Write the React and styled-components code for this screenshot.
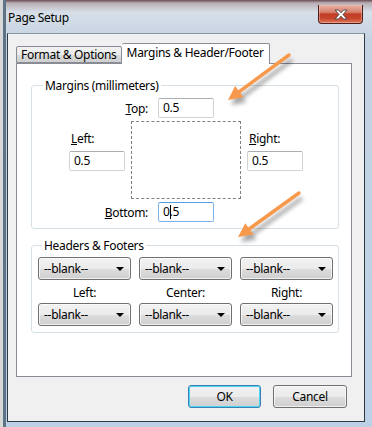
import React from "react";
import styled, { createGlobalStyle } from "styled-components";

const GlobalStyle = createGlobalStyle`
	html, body {
		margin: 0;
		padding: 0;
		background: #d6d6d6;
	}
	body {
		font-family: "Noto Sans", "Open Sans", "Liberation Sans", sans-serif;
		font-size: 12px;
		letter-spacing: -0.3px;
		color: #000;
	}
`;

const Window = styled.div`
	position: relative;
	width: 372px;
	height: 427px;
	box-sizing: border-box;
	display: flex;
	flex-direction: column;
	padding: 0 7px 5px 4px;
	background:
		linear-gradient(90deg, #5f7386 0, #5f7386 3px, transparent 3px),
		linear-gradient(180deg, #6a4a52 0, #b7aeb4 3px, #d7dfe8 12px, #c4d3e2 40px, #bcd1e6 100%);
	border-left: 3px solid #d8d8d8;
	overflow: hidden;
`;

const TitleBar = styled.div`
	height: 33px;
	display: flex;
	justify-content: space-between;
	align-items: flex-start;
`;

const Title = styled.div`
	margin-top: 10px;
	margin-left: 1px;
	font-size: 12px;
	line-height: 15px;
	color: #000;
`;

const CloseButton = styled.div`
	margin-top: 5px;
	margin-right: 2px;
	width: 45px;
	height: 19px;
	box-sizing: border-box;
	border: 1px solid #4a1f1a;
	border-top: none;
	border-radius: 0 0 4px 4px;
	background: linear-gradient(180deg, #e6b0a4 0%, #d7826f 40%, #c23d26 50%, #c7452c 75%, #dd7a5c 100%);
	box-shadow: inset 0 0 0 1px rgba(255, 200, 190, 0.45);
	display: flex;
	align-items: center;
	justify-content: center;
`;

const Client = styled.div`
	flex: 1;
	display: flex;
	flex-direction: column;
	background: #f0f0f0;
	border: 1px solid #2f3a45;
	border-top-color: #8a96a3;
`;

const TabArea = styled.div`
	margin: 9px 12px 0 8px;
	display: flex;
	flex-direction: column;
`;

const TabStrip = styled.div`
	display: flex;
	align-items: flex-end;
	height: 20px;
	position: relative;
	z-index: 1;
`;

const Tab = styled.div`
	box-sizing: border-box;
	height: ${(p) => (p.$active ? "21px" : "17px")};
	padding: 0 ${(p) => (p.$active ? "5px" : "4px")};
	margin-bottom: ${(p) => (p.$active ? "-1px" : "0")};
	border: 1px solid #898c95;
	border-bottom: ${(p) => (p.$active ? "none" : "1px solid #898c95")};
	border-left: ${(p) => (p.$active ? "none" : "1px solid #898c95")};
	border-radius: 2px 2px 0 0;
	background: ${(p) => (p.$active ? "#fff" : "linear-gradient(180deg, #f2f2f2 0%, #ebebeb 50%, #dddddd 51%, #cfcfcf 100%)")};
	line-height: ${(p) => (p.$active ? "18px" : "15px")};
	white-space: nowrap;
`;

const Panel = styled.div`
	height: 314px;
	box-sizing: border-box;
	background: #fff;
	border: 1px solid #898c95;
	padding: 14px 12px 0 14px;
`;

const Group = styled.fieldset`
	margin: 0 0 ${(p) => p.$gap || 0}px 0;
	padding: ${(p) => p.$pad};
	border: 1px solid #d5dfe5;
	border-radius: 3px;
	min-width: 0;
`;

const Legend = styled.legend`
	margin-left: 5px;
	padding: 0 2px;
	font-size: 12px;
	line-height: 15px;
`;

const MarginGrid = styled.div`
	display: grid;
	grid-template-columns: 56px 110px 56px;
	column-gap: 6px;
	justify-content: center;
	margin-left: 2px;
`;

const CenterRow = styled.div`
	grid-column: 1 / 4;
	display: grid;
	grid-template-columns: 1fr 56px 1fr;
	align-items: center;
	margin: ${(p) => p.$margin};
`;

const RowLabel = styled.label`
	text-align: right;
	padding-right: 10px;
	line-height: 15px;
`;

const SideCol = styled.div`
	display: flex;
	flex-direction: column;
	gap: 5px;
	padding-top: 10px;
	label {
		line-height: 15px;
		padding-left: 2px;
	}
`;

const DashedBox = styled.div`
	height: 78px;
	border: 1px dashed #808080;
	box-sizing: border-box;
`;

const TextBox = styled.div`
	height: 20px;
	box-sizing: border-box;
	border: 1px solid ${(p) => (p.$focused ? "#7eb4ea" : "#d0d4d9")};
	border-top-color: ${(p) => (p.$focused ? "#569de5" : "#abadb3")};
	border-radius: 2px;
	background: #fff;
	padding: 0 0 0 4px;
	line-height: 18px;
`;

const Caret = styled.span`
	display: inline-block;
	width: 1px;
	height: 14px;
	margin-right: -1px;
	background: #000;
	vertical-align: -3px;
`;

const SelectGrid = styled.div`
	display: grid;
	grid-template-columns: repeat(3, 93px);
	column-gap: 8px;
	margin-left: 1px;
`;

const Select = styled.div`
	height: 23px;
	box-sizing: border-box;
	border: 1px solid #707070;
	border-radius: 3px;
	background: linear-gradient(180deg, #f2f2f2 0%, #ebebeb 50%, #dddddd 51%, #cfcfcf 100%);
	box-shadow: inset 0 0 0 1px rgba(255, 255, 255, 0.7);
	display: flex;
	align-items: center;
	justify-content: space-between;
	padding: 0 5px 0 5px;
	line-height: 15px;
`;

const Arrow = styled.span`
	width: 0;
	height: 0;
	border-left: 4px solid transparent;
	border-right: 4px solid transparent;
	border-top: 4px solid #000;
	margin-right: 1px;
`;

const PosLabel = styled.div`
	text-align: center;
	line-height: 15px;
	margin: 5px 0 3px;
`;

const ButtonRow = styled.div`
	display: flex;
	justify-content: flex-end;
	gap: 12px;
	margin: 8px 17px 0 0;
`;

const Button = styled.div`
	width: ${(p) => p.$w}px;
	height: 23px;
	box-sizing: border-box;
	border: 1px solid ${(p) => (p.$default ? "#3c7fb1" : "#707070")};
	border-radius: 3px;
	background: linear-gradient(180deg, #f2f2f2 0%, #ebebeb 50%, #dddddd 51%, #cfcfcf 100%);
	box-shadow: inset 0 0 0 1px ${(p) => (p.$default ? "#48d7f4" : "rgba(255,255,255,0.7)")};
	display: flex;
	align-items: center;
	justify-content: center;
	line-height: 15px;
`;

const Overlay = styled.svg`
	position: absolute;
	left: -3px;
	top: 0;
	pointer-events: none;
`;

const CloseGlyph = () => (
	<svg width="14" height="11" viewBox="0 0 14 11">
		<path
			d="M1 1 H4.5 L7 3.8 L9.5 1 H13 L9 5.5 L13 10 H9.5 L7 7.2 L4.5 10 H1 L5 5.5 Z"
			fill="#fff"
			stroke="#5a4a4a"
			strokeWidth="1"
			strokeLinejoin="round"
		/>
	</svg>
);

const PointerArrow = ({ x1, y1, x2, y2 }) => {
	const dx = x2 - x1;
	const dy = y2 - y1;
	const len = Math.hypot(dx, dy);
	const ux = dx / len;
	const uy = dy / len;
	const bx = x2 - ux * 14;
	const by = y2 - uy * 14;
	const px = -uy * 7;
	const py = ux * 7;
	const head = `${x2},${y2} ${bx + px},${by + py} ${bx - px},${by - py}`;
	return (
		<g>
			<g transform="translate(3,5)" opacity="0.35" filter="url(#blur)">
				<line x1={x1} y1={y1} x2={bx} y2={by} stroke="#000" strokeWidth="4" />
				<polygon points={head} fill="#000" />
			</g>
			<line x1={x1} y1={y1} x2={bx + ux * 2} y2={by + uy * 2} stroke="#f7994c" strokeWidth="3.5" strokeLinecap="round" />
			<polygon points={head} fill="#f7994c" />
		</g>
	);
};

export default function App() {
	return (
		<>
			<GlobalStyle />
			<Window>
				<TitleBar>
					<Title>Page Setup</Title>
					<CloseButton>
						<CloseGlyph />
					</CloseButton>
				</TitleBar>
				<Client>
					<TabArea>
						<TabStrip>
							<Tab>Format &amp; Options</Tab>
							<Tab $active>Margins &amp; Header/Footer</Tab>
						</TabStrip>
						<Panel>
							<Group $pad="5px 6px 6px 6px" $gap={9}>
								<Legend>Margins (millimeters)</Legend>
								<MarginGrid>
									<CenterRow $margin="0 0 3px 0">
										<RowLabel>
											<u>T</u>op:
										</RowLabel>
										<TextBox>0.5</TextBox>
									</CenterRow>
									<SideCol>
										<label>
											<u>L</u>eft:
										</label>
										<TextBox>0.5</TextBox>
									</SideCol>
									<DashedBox />
									<SideCol>
										<label>
											<u>R</u>ight:
										</label>
										<TextBox>0.5</TextBox>
									</SideCol>
									<CenterRow $margin="3px 0 0 0">
										<RowLabel>
											<u>B</u>ottom:
										</RowLabel>
										<TextBox $focused>
											0<Caret />.5
										</TextBox>
									</CenterRow>
								</MarginGrid>
							</Group>
							<Group $pad="4px 6px 6px 5px">
								<Legend>Headers &amp; Footers</Legend>
								<SelectGrid>
									{[0, 1, 2].map((i) => (
										<Select key={"t" + i}>
											--blank--
											<Arrow />
										</Select>
									))}
									{["Left:", "Center:", "Right:"].map((t) => (
										<PosLabel key={t}>{t}</PosLabel>
									))}
									{[0, 1, 2].map((i) => (
										<Select key={"b" + i}>
											--blank--
											<Arrow />
										</Select>
									))}
								</SelectGrid>
							</Group>
						</Panel>
					</TabArea>
					<ButtonRow>
						<Button $w={73} $default>
							OK
						</Button>
						<Button $w={74}>Cancel</Button>
					</ButtonRow>
				</Client>
				<Overlay width="372" height="427">
					<defs>
						<filter id="blur" x="-20%" y="-20%" width="140%" height="140%">
							<feGaussianBlur stdDeviation="2" />
						</filter>
					</defs>
					<PointerArrow x1={289} y1={55} x2={228} y2={100} />
					<PointerArrow x1={299} y1={193} x2={238} y2={237} />
				</Overlay>
			</Window>
		</>
	);
}
